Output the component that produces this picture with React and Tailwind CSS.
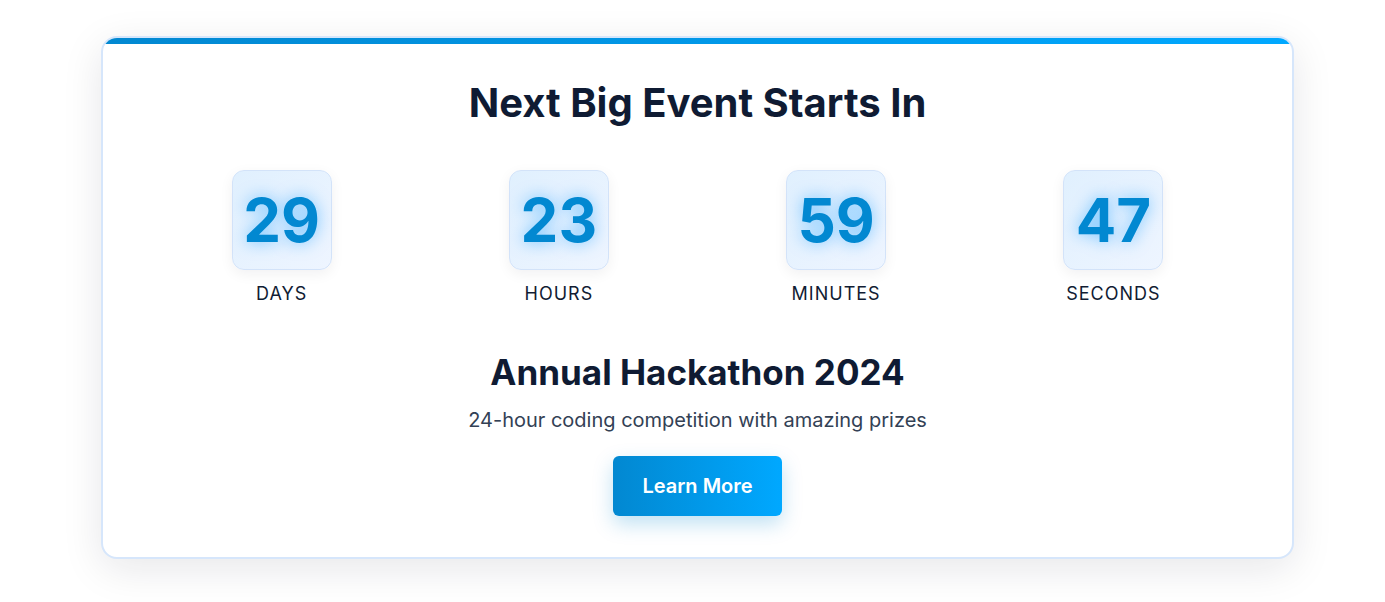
import React from "react";

const units = [
  { value: "29", label: "Days" },
  { value: "23", label: "Hours" },
  { value: "59", label: "Minutes" },
  { value: "47", label: "Seconds" },
];

export default function App() {
  return (
    <div className="min-h-screen bg-white pl-[101px] pt-[36px] font-['Inter',sans-serif]">
      <div className="w-[1193px] overflow-hidden rounded-2xl border-2 border-[#d6e6fb] bg-white shadow-[0_10px_40px_rgba(15,23,42,0.10)]">
        <div className="h-[6px] bg-gradient-to-r from-[#0288d1] to-[#00a8ff]" />
        <div className="px-10 pt-[39px] pb-[41px] text-center">
          <h2 className="text-[40px] leading-10 font-bold text-[#0f1b33]">
            Next Big Event Starts In
          </h2>

          <div className="mt-[47px] grid grid-cols-4">
            {units.map((u) => (
              <div key={u.label} className="flex flex-col items-center">
                <div className="flex h-[100px] w-[100px] items-center justify-center rounded-xl border border-[#d3e3f9] bg-gradient-to-br from-[#e0f0fe] to-[#eef5ff] shadow-[0_4px_14px_rgba(15,23,42,0.06)]">
                  <span className="text-6xl leading-none font-bold text-[#0288d1] [text-shadow:0_0_16px_rgba(0,150,255,0.5)]">
                    {u.value}
                  </span>
                </div>
                <span className="mt-[10px] text-lg leading-7 uppercase tracking-[1px] text-[#111c33]">
                  {u.label}
                </span>
              </div>
            ))}
          </div>

          <h3 className="mt-[43px] text-[35px] leading-[42px] font-bold text-[#0f1b33]">
            Annual Hackathon 2024
          </h3>
          <p className="mt-[13px] text-xl leading-7 text-[#334155]">
            24-hour coding competition with amazing prizes
          </p>
          <button className="mt-[22px] h-[60px] w-[169px] rounded-md bg-gradient-to-r from-[#0288d1] to-[#00a8ff] text-[20px] font-semibold text-white shadow-[0_8px_20px_rgba(2,136,209,0.25)]">
            Learn More
          </button>
        </div>
      </div>
    </div>
  );
}
